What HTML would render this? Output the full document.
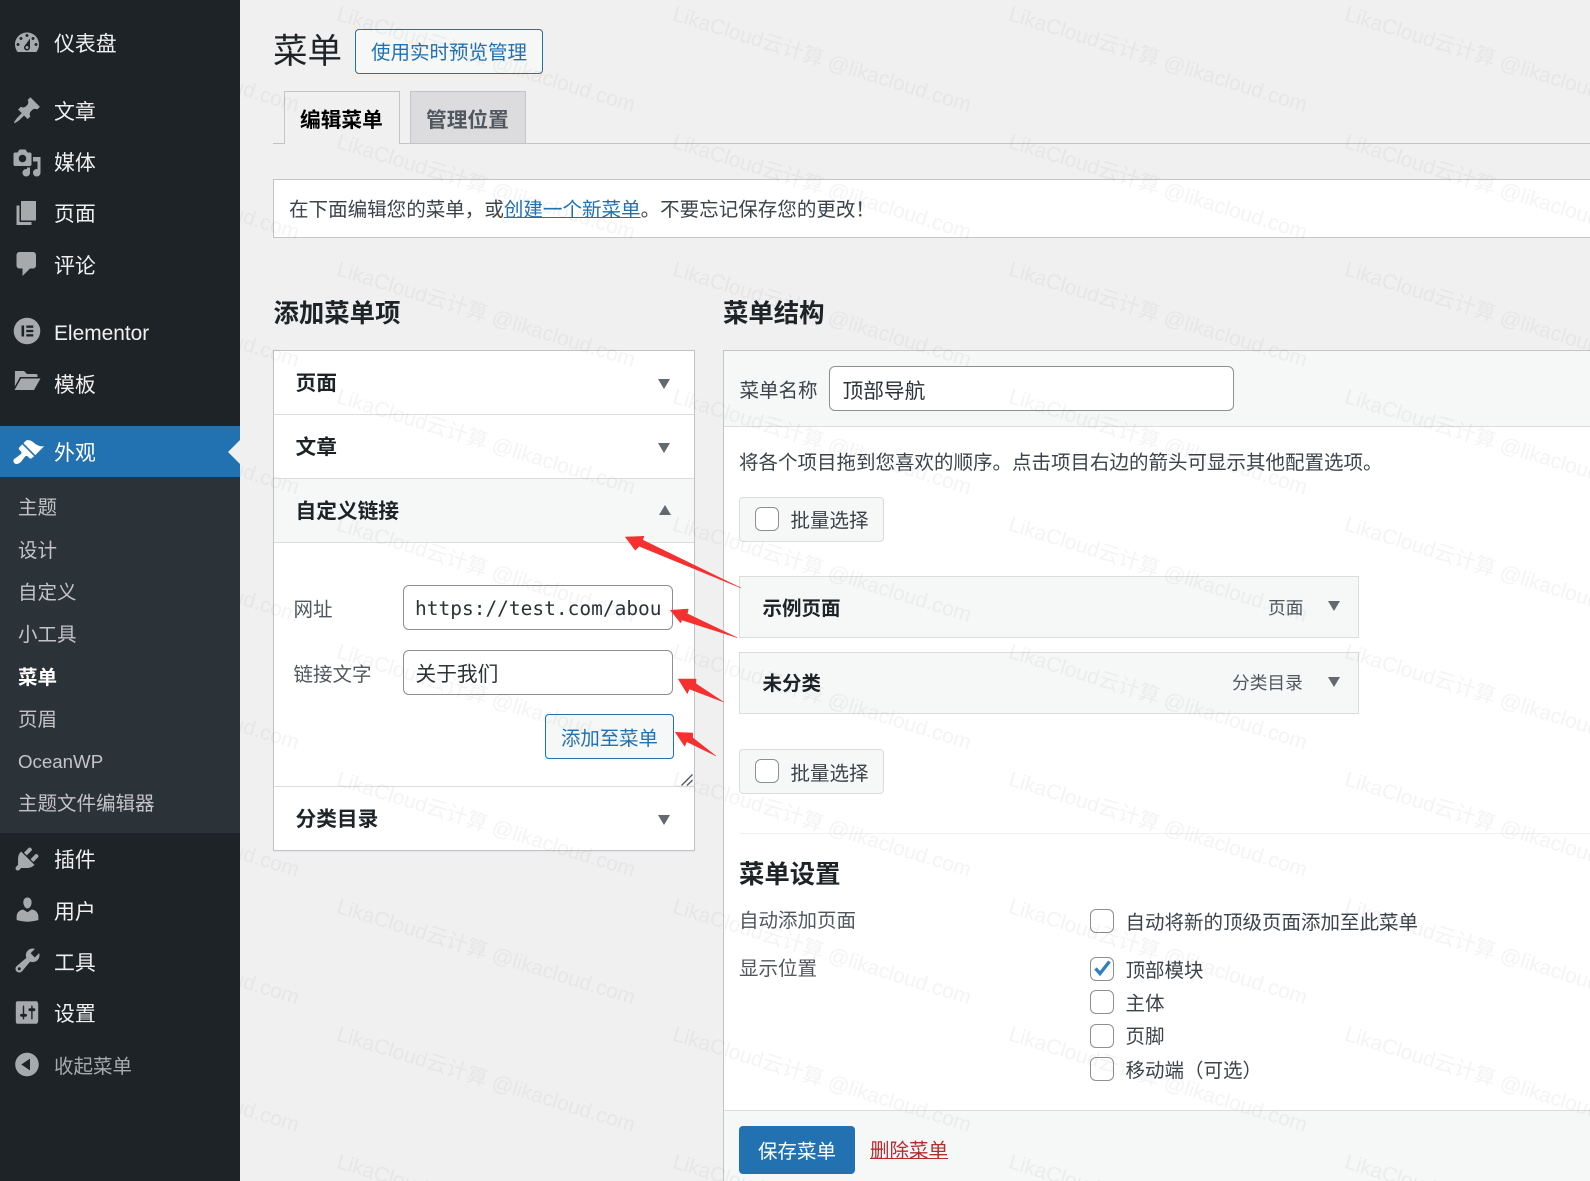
<!DOCTYPE html>
<html lang="zh-CN">
<head>
<meta charset="utf-8">
<title>菜单</title>
<style>
html,body{margin:0;padding:0;width:1590px;height:1181px;overflow:hidden;background:#f0f0f1;}
body{position:relative;font-family:"Liberation Sans","Noto Sans CJK SC",sans-serif;font-size:19.5px;color:#3c434a;}
.a{position:absolute;box-sizing:border-box;}
.t{position:absolute;white-space:nowrap;line-height:30px;height:30px;}
.m{color:#f0f0f1;font-size:20.9px;left:54px;}
.s{color:#c3c4c7;font-size:19.5px;left:18px;}
.h{font-weight:700;font-size:20.7px;color:#1d2327;left:295.5px;}
.b{font-weight:700;font-size:25.4px;color:#1d2327;}
.c{position:absolute;box-sizing:border-box;width:24px;height:24px;background:#fff;border:1px solid #8c8f94;border-radius:6px;}
.i{position:absolute;box-sizing:border-box;background:#fff;border:1px solid #8c8f94;border-radius:6px;}
.l{color:#50575e;}
.tri{position:absolute;width:0;height:0;border-left:6.5px solid transparent;border-right:6.5px solid transparent;}
.dn{border-top:10px solid #646970;}
.up{border-bottom:10px solid #646970;}
.bulk{position:absolute;box-sizing:border-box;left:739px;width:145px;height:45px;background:#f6f7f7;border:1px solid #dcdcde;border-radius:4px;}
.item{position:absolute;box-sizing:border-box;left:739px;width:620px;height:62px;background:#f6f7f7;border:1px solid #dcdcde;}
a{color:#2271b1;}
</style>
</head>
<body>

<!-- sidebar -->
<div class="a" style="left:0;top:0;width:240px;height:1181px;background:#1d2327;"></div>
<div class="a" style="left:0;top:426px;width:240px;height:51px;background:#2271b1;"></div>
<div class="a" style="left:0;top:477px;width:240px;height:356px;background:#2c3338;"></div>
<div class="a" style="left:228px;top:440px;width:0;height:0;border-top:12px solid transparent;border-bottom:12px solid transparent;border-right:12px solid #f0f0f1;"></div>

<div class="t m" style="top:30px;">仪表盘</div>
<div class="t m" style="top:98px;">文章</div>
<div class="t m" style="top:149px;">媒体</div>
<div class="t m" style="top:200px;">页面</div>
<div class="t m" style="top:252px;">评论</div>
<div class="t m" style="top:319px;">Elementor</div>
<div class="t m" style="top:370.5px;">模板</div>
<div class="t m" style="top:439px;color:#fff;">外观</div>
<div class="t s" style="top:493px;">主题</div>
<div class="t s" style="top:536px;">设计</div>
<div class="t s" style="top:578px;">自定义</div>
<div class="t s" style="top:620px;">小工具</div>
<div class="t s" style="top:663px;color:#fff;font-weight:700;">菜单</div>
<div class="t s" style="top:705px;">页眉</div>
<div class="t s" style="top:747px;font-size:18.7px;">OceanWP</div>
<div class="t s" style="top:789px;">主题文件编辑器</div>
<div class="t m" style="top:846px;">插件</div>
<div class="t m" style="top:898px;">用户</div>
<div class="t m" style="top:949px;">工具</div>
<div class="t m" style="top:1000px;">设置</div>
<div class="t m" style="top:1051.5px;font-size:19.5px;color:#a7aaad;">收起菜单</div>

<svg class="a" style="left:0;top:0;" width="240" height="1181" viewBox="0 0 240 1181" fill="#a7aaad">
<g transform="translate(12,28) scale(1.5)"><path fill-rule="evenodd" d="M3.76 16h12.48c1.1-1.37 1.76-3.11 1.76-5 0-4.42-3.58-8-8-8s-8 3.58-8 8c0 1.89.66 3.63 1.76 5zM10 4c.55 0 1 .45 1 1s-.45 1-1 1-1-.45-1-1 .45-1 1-1zM6 6c.55 0 1 .45 1 1s-.45 1-1 1-1-.45-1-1 .45-1 1-1zm8 0c.55 0 1 .45 1 1s-.45 1-1 1-1-.45-1-1 .45-1 1-1zm-5.37 5.55L12 7v6c0 1.1-.9 2-2 2s-2-.9-2-2c0-.57.24-1.08.63-1.45zM4 10c.55 0 1 .45 1 1s-.45 1-1 1-1-.45-1-1 .45-1 1-1zm12 0c.55 0 1 .45 1 1s-.45 1-1 1-1-.45-1-1 .45-1 1-1zm-5 3c0-.55-.45-1-1-1s-1 .45-1 1 .45 1 1 1 1-.45 1-1z"/></g>
<g transform="translate(12,95.5) scale(1.5)"><path d="M10.44 3.02l1.82-1.82 6.36 6.35-1.83 1.82c-1.05-.68-2.48-.57-3.41.36l-.75.75c-.92.93-1.04 2.35-.35 3.41l-1.83 1.82-2.41-2.41-2.8 2.79c-.42.42-3.38 2.71-3.8 2.29s1.86-3.39 2.28-3.81l2.79-2.79L4.1 9.36l1.83-1.82c1.05.69 2.48.57 3.4-.36l.75-.75c.93-.92 1.05-2.35.36-3.41z"/></g>
<g transform="translate(12,148) scale(1.5)"><path fill-rule="evenodd" d="M13 11V4c0-.55-.45-1-1-1h-1.67L9 1H5L3.67 3H2c-.55 0-1 .45-1 1v7c0 .55.45 1 1 1h10c.55 0 1-.45 1-1zM7 4.5c1.38 0 2.5 1.12 2.5 2.5S8.38 9.5 7 9.5 4.5 8.38 4.5 7 5.62 4.5 7 4.5zM14 6h5v10.5c0 1.38-1.12 2.5-2.5 2.5S14 17.88 14 16.5s1.12-2.5 2.5-2.5c.17 0 .34.02.5.05V9h-3V6zm-4 8.05V13h2v3.5c0 1.38-1.12 2.5-2.5 2.5S7 17.88 7 16.5 8.12 14 9.5 14c.17 0 .34.02.5.05z"/></g>
<g transform="translate(12,198) scale(1.5)"><path d="M6 15V2h10v13H6zm-1 1h8v2H3V5h2v11z"/></g>
<g transform="translate(12,249) scale(1.5)"><path d="M5 2h9c1.1 0 2 .9 2 2v7c0 1.1-.9 2-2 2h-2l-5 5v-5H5c-1.1 0-2-.9-2-2V4c0-1.1.9-2 2-2z"/></g>
<circle cx="27" cy="331" r="13.3"/>
<g fill="#1d2327"><rect x="21.5" y="325.5" width="2.6" height="11"/><rect x="26.3" y="325.5" width="7" height="2.3"/><rect x="26.3" y="329.9" width="7" height="2.3"/><rect x="26.3" y="334.2" width="7" height="2.3"/></g>
<path d="M15 371h9l3 3h9a1.5 1.5 0 0 1 1.5 1.5V377H20l-5.200 9.500z"/><path d="M14.500 390l6.500-11.500h19.500L34 390z"/>
<g transform="translate(11,436.500) scale(1.68)" fill="#fff"><path d="M14.48 11.06L7.41 3.99l1.5-1.5c.5-.56 2.3-.47 3.51.32 1.21.8 1.43 1.28 2.91 2.1 1.18.64 2.45 1.26 4.45.85zm-.71.71L6.7 4.7 4.93 6.47c-.39.39-.39 1.02 0 1.41l1.06 1.06c.39.39.39 1.03 0 1.42-.6.6-1.43 1.11-2.21 1.69-.35.26-.7.53-1.01.84C1.43 13.23 1 14.85 1.98 15.83l.03.03c.97.97 2.6.54 3.94-.8.31-.31.58-.66.84-1.01.58-.78 1.09-1.61 1.69-2.21.39-.39 1.03-.39 1.42 0l1.06 1.06c.39.39 1.02.39 1.41 0z"/></g>
<g transform="translate(12,844) scale(1.5)"><path d="M13.11 4.36L9.87 7.6 8 5.73l3.24-3.24c.35-.34 1.05-.2 1.56.32.52.51.66 1.21.31 1.55zm-8 1.77l.91-1.12 9.01 9.01-1.19.84c-.71.71-2.63 1.16-3.82 1.16H6.14L4.9 17.26c-.59.59-1.54.59-2.12 0-.59-.58-.59-1.53 0-2.12l1.24-1.24v-3.88c0-1.13.4-3.19 1.09-3.89zm7.26 3.97l3.24-3.24c.34-.35 1.04-.21 1.55.31.52.51.66 1.21.31 1.55l-3.24 3.25z"/></g>
<g transform="translate(12.500,894.500) scale(1.5)"><path d="M10 9.25c-2.27 0-2.73-3.44-2.73-3.44C7 4.02 7.82 2 9.97 2c2.16 0 2.98 2.02 2.71 3.81 0 0-.41 3.44-2.68 3.44zm0 2.57L12.72 10c2.39 0 4.52 2.33 4.52 4.53v2.49s-3.65 1.13-7.24 1.13c-3.65 0-7.24-1.13-7.24-1.13v-2.49c0-2.25 1.94-4.48 4.47-4.48z"/></g>
<g transform="translate(12.500,945.500) scale(1.5)"><path fill-rule="evenodd" d="M16.68 9.77c-1.34 1.34-3.3 1.67-4.95.99l-5.41 6.52c-.99.99-2.59.99-3.58 0s-.99-2.59 0-3.57l6.52-5.42c-.68-1.65-.35-3.61.99-4.95 1.28-1.28 3.12-1.62 4.72-1.06l-2.89 2.89 2.82 2.82 2.86-2.87c.53 1.58.18 3.39-1.08 4.65zM3.81 16.21c.4.39 1.04.39 1.43 0 .4-.4.4-1.04 0-1.43-.39-.4-1.03-.4-1.43 0-.39.39-.39 1.03 0 1.43z"/></g>
<g transform="translate(13,998.500) scale(1.4)"><path fill-rule="evenodd" d="M18 16V4c0-1.100-.9-2-1-2H3c-.6 0-1 .9-1 2v12c0 1.100.4 2 1 2h14c.1 0 1-.9 1-2zM8 11h1c.55 0 1 .45 1 1s-.45 1-1 1H8v1.500c0 .28-.22.5-.5.5s-.5-.22-.5-.5V13H6c-.55 0-1-.45-1-1s.45-1 1-1h1V5.500c0-.28.22-.5.5-.5s.5.22.5.5V11zm5-2h-1c-.55 0-1-.45-1-1s.45-1 1-1h1V5.500c0-.28.22-.5.5-.5s.5.22.5.5V7h1c.55 0 1 .45 1 1s-.45 1-1 1h-1v5.500c0 .28-.22.5-.5.5s-.5-.22-.5-.5V9z"/></g>
<g transform="translate(12,1049.500) scale(1.5)"><path fill-rule="evenodd" d="M10 2.160c4.330 0 7.840 3.510 7.840 7.840s-3.510 7.840-7.840 7.840S2.160 14.330 2.160 10 5.710 2.160 10 2.160zm2 11.720V6.120L6.180 9.970z"/></g>
</svg>

<!-- heading -->
<div class="t" style="left:273px;top:37px;font-size:34.5px;color:#1d2327;">菜单</div>
<div class="a" style="left:355px;top:29px;width:188px;height:45px;background:#f6f7f7;border:1px solid #2271b1;border-radius:4px;"></div>
<div class="t" style="left:371px;top:37.5px;font-size:19.5px;color:#2271b1;">使用实时预览管理</div>

<!-- tabs -->
<div class="a" style="left:273px;top:143px;width:1317px;height:1px;background:#c3c4c7;"></div>
<div class="a" style="left:284px;top:91px;width:116px;height:53px;background:#f0f0f1;border:1px solid #c3c4c7;border-bottom:0;"></div>
<div class="a" style="left:410px;top:91px;width:116px;height:52px;background:#dcdcde;border:1px solid #c3c4c7;border-bottom:0;"></div>
<div class="t" style="left:300px;top:106px;font-size:20.7px;font-weight:700;color:#000;">编辑菜单</div>
<div class="t" style="left:426px;top:106px;font-size:20.7px;font-weight:700;color:#50575e;">管理位置</div>

<!-- notice -->
<div class="a" style="left:273px;top:179px;width:1317px;height:59px;background:#fff;border:1px solid #c3c4c7;border-right:0;"></div>
<div class="t" style="left:289px;top:194.5px;font-size:19.55px;color:#3c434a;">在下面编辑您的菜单，或<a href="#" style="color:#2271b1;">创建一个新菜单</a>。不要忘记保存您的更改！</div>

<!-- section titles -->
<div class="t b" style="left:273.500px;top:299px;">添加菜单项</div>
<div class="t b" style="left:723px;top:299px;">菜单结构</div>

<!-- left box -->
<div class="a" style="left:273px;top:350px;width:422px;height:501px;background:#fff;border:1px solid #c3c4c7;box-shadow:0 1px 1px rgba(0,0,0,.04);"></div>
<div class="a" style="left:274px;top:478px;width:420px;height:65px;background:#f6f7f7;"></div>
<div class="a" style="left:274px;top:414px;width:420px;height:1px;background:#dcdcde;"></div>
<div class="a" style="left:274px;top:478px;width:420px;height:1px;background:#dcdcde;"></div>
<div class="a" style="left:274px;top:542px;width:420px;height:1px;background:#dcdcde;"></div>
<div class="a" style="left:274px;top:786px;width:420px;height:1px;background:#dcdcde;"></div>
<div class="t h" style="top:368.5px;">页面</div>
<div class="t h" style="top:433px;">文章</div>
<div class="t h" style="top:497px;">自定义链接</div>
<div class="t h" style="top:804.5px;">分类目录</div>
<div class="tri dn" style="left:657.5px;top:379px;"></div>
<div class="tri dn" style="left:657.5px;top:443px;"></div>
<div class="tri up" style="left:658.5px;top:505px;"></div>
<div class="tri dn" style="left:657.5px;top:815px;"></div>
<div class="t l" style="left:293.5px;top:595px;">网址</div>
<div class="t l" style="left:293.5px;top:659.5px;">链接文字</div>
<div class="i" style="left:403px;top:585px;width:270px;height:45px;"></div>
<div class="i" style="left:403px;top:650px;width:270px;height:45px;"></div>
<div class="t" style="left:415px;top:594px;width:245px;overflow:hidden;font-family:'DejaVu Sans Mono','Liberation Mono',monospace;font-size:19.5px;color:#2c3338;">https://test.com/about</div>
<div class="t" style="left:415.500px;top:660px;font-size:20.7px;color:#2c3338;">关于我们</div>
<div class="a" style="left:545px;top:714px;width:129px;height:45px;background:#f6f7f7;border:1px solid #2271b1;border-radius:4px;"></div>
<div class="t" style="left:561px;top:724px;font-size:19.4px;color:#2271b1;">添加至菜单</div>
<svg class="a" style="left:680px;top:773px;" width="14" height="14" stroke="#50575e" stroke-width="1.300" fill="none"><path d="M1.500 12.500L12.500 1.500M7 12.500L12.500 7"/></svg>

<!-- right box -->
<div class="a" style="left:723px;top:350px;width:867px;height:831px;background:#fff;border-left:1px solid #c3c4c7;border-top:1px solid #c3c4c7;"></div>
<div class="a" style="left:724px;top:351px;width:866px;height:76px;background:#f6f7f7;border-bottom:1px solid #dcdcde;"></div>
<div class="a" style="left:724px;top:1110px;width:866px;height:71px;background:#f6f7f7;border-top:1px solid #dcdcde;"></div>
<div class="t" style="left:739.500px;top:375.5px;">菜单名称</div>
<div class="i" style="left:829px;top:366px;width:405px;height:45px;"></div>
<div class="t" style="left:842.500px;top:377px;font-size:20.7px;color:#2c3338;">顶部导航</div>
<div class="t" style="left:739px;top:448px;">将各个项目拖到您喜欢的顺序。点击项目右边的箭头可显示其他配置选项。</div>

<div class="bulk" style="top:497px;"></div>
<div class="c" style="left:755px;top:507px;"></div>
<div class="t" style="left:790.5px;top:506px;">批量选择</div>

<div class="item" style="top:576px;"></div>
<div class="t" style="left:762.5px;top:593.5px;font-weight:700;color:#1d2327;">示例页面</div>
<div class="t" style="left:1268px;top:593px;font-size:17.700px;color:#50575e;">页面</div>
<div class="tri dn" style="left:1328px;top:601px;"></div>

<div class="item" style="top:652px;"></div>
<div class="t" style="left:762.5px;top:669px;font-weight:700;color:#1d2327;">未分类</div>
<div class="t" style="left:1232px;top:667.5px;font-size:17.700px;color:#50575e;">分类目录</div>
<div class="tri dn" style="left:1328px;top:676.5px;"></div>

<div class="bulk" style="top:749px;"></div>
<div class="c" style="left:755px;top:759px;"></div>
<div class="t" style="left:790.5px;top:758.5px;">批量选择</div>

<div class="a" style="left:740px;top:833px;width:850px;height:1px;background:#f0f0f1;"></div>
<div class="t b" style="left:739px;top:860px;">菜单设置</div>
<div class="t l" style="left:739px;top:906px;">自动添加页面</div>
<div class="t l" style="left:739px;top:954px;">显示位置</div>

<div class="c" style="left:1090px;top:909px;"></div>
<div class="t" style="left:1125.5px;top:908px;">自动将新的顶级页面添加至此菜单</div>
<div class="c" style="left:1090px;top:957px;"></div>
<svg class="a" style="left:1090px;top:957px;" width="24" height="24" fill="none" stroke="#2f7fc1" stroke-width="3.400"><path d="M5.500 11.500L10 16.500L19.500 4.500"/></svg>
<div class="t" style="left:1125.5px;top:956px;">顶部模块</div>
<div class="c" style="left:1090px;top:990px;"></div>
<div class="t" style="left:1125.5px;top:989px;">主体</div>
<div class="c" style="left:1090px;top:1024px;"></div>
<div class="t" style="left:1125.5px;top:1022px;">页脚</div>
<div class="c" style="left:1090px;top:1057px;"></div>
<div class="t" style="left:1125.5px;top:1056px;">移动端（可选）</div>

<div class="a" style="left:739px;top:1126px;width:116px;height:48px;background:#2271b1;border-radius:4px;"></div>
<div class="t" style="left:758px;top:1137px;font-size:19.500px;color:#fff;">保存菜单</div>
<div class="t" style="left:870px;top:1136px;font-size:19.5px;color:#b32d2e;text-decoration:underline;">删除菜单</div>

<!-- watermark + arrows -->
<svg class="a" style="left:0;top:0;pointer-events:none;" width="1590" height="1181" viewBox="0 0 1590 1181">
<defs>
<pattern id="wm" patternUnits="userSpaceOnUse" x="-8" y="0" width="336" height="127.500">
<text x="0" y="0" transform="translate(7.500,20) rotate(17.200)" font-family="'Liberation Sans','Noto Sans CJK SC',sans-serif" font-size="21" fill="#000" fill-opacity=".045" textLength="311" lengthAdjust="spacingAndGlyphs">LikaCloud云计算 @likacloud.com</text>
</pattern>
</defs>
<rect x="240" y="0" width="1350" height="1181" fill="url(#wm)"/>
<g fill="#f5312f" stroke="#f5312f" stroke-width=".5" stroke-linejoin="round">
<polygon points="625.300,537 644,536.300 642.700,540 741,588 639.300,546.300 635.300,550.300"/>
<polygon points="670.300,610.300 688.300,609 687.300,613.700 737.300,637.700 681.700,620 680.700,623"/>
<polygon points="678.300,679 696,679 696,683.700 723.500,702 689.300,689 687.300,693.700"/>
<polygon points="675.300,732.300 692.700,733 692.700,737.700 716,756 686.700,741.700 684.700,746.300"/>
</g>
</svg>
</body>
</html>
